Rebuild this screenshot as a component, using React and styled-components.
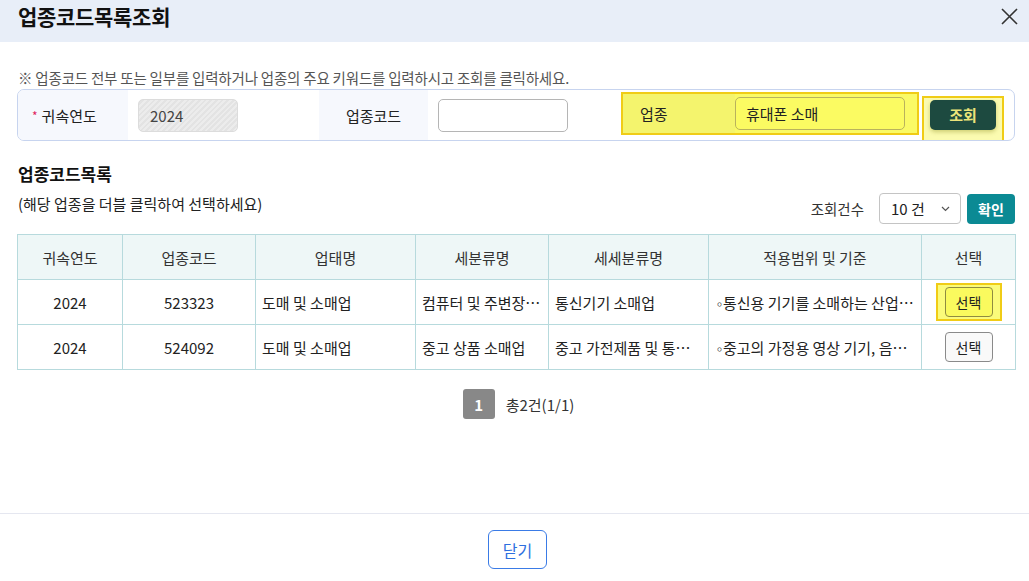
import styled, { createGlobalStyle } from 'styled-components';

const GlobalStyle = createGlobalStyle`
  * {
    box-sizing: border-box;
  }

  body {
    margin: 0;
    background: #ffffff;
    font-family: 'Noto Sans CJK KR', 'Noto Sans', sans-serif;
    color: #222;
  }
`;

const ROWS = [
  {
    year: '2024',
    code: '523323',
    biz: '도매 및 소매업',
    sub: '컴퓨터 및 주변장치 소매업',
    subSub: '통신기기 소매업',
    scope: '통신용 기기를 소매하는 산업활동을 말한다',
    guide: true,
  },
  {
    year: '2024',
    code: '524092',
    biz: '도매 및 소매업',
    sub: '중고 상품 소매업',
    subSub: '중고 가전제품 및 통신기기 소매업',
    scope: '중고의 가정용 영상 기기, 음향 기기를 소매',
    guide: false,
  },
];

const COLUMNS = [
  { title: '귀속연도', width: 105 },
  { title: '업종코드', width: 133 },
  { title: '업태명', width: 160 },
  { title: '세분류명', width: 133 },
  { title: '세세분류명', width: 160 },
  { title: '적용범위 및 기준', width: 213 },
  { title: '선택', width: 94 },
];

function CloseIcon() {
  return (
    <svg width="17" height="17" viewBox="0 0 17 17" fill="none">
      <path d="M1 1L16 16M16 1L1 16" stroke="#333" strokeWidth="1.6" />
    </svg>
  );
}

function ChevronIcon() {
  return (
    <svg width="9" height="6" viewBox="0 0 9 6" fill="none">
      <path d="M1 1L4.5 4.5L8 1" stroke="#555" strokeWidth="1.2" />
    </svg>
  );
}

function App() {
  return (
    <>
      <GlobalStyle />
      <Page>
        <Header>
          <Title>업종코드목록조회</Title>
          <CloseButton aria-label="닫기">
            <CloseIcon />
          </CloseButton>
        </Header>

        <Body>
          <Notice>※ 업종코드 전부 또는 일부를 입력하거나 업종의 주요 키워드를 입력하시고 조회를 클릭하세요.</Notice>

          <SearchBox>
            <LabelCell $width={110} $align="left">
              <Required>*</Required>귀속연도
            </LabelCell>
            <InputCell $width={191}>
              <ReadonlyInput>2024</ReadonlyInput>
            </InputCell>
            <LabelCell $width={109} $align="center">업종코드</LabelCell>
            <InputCell $width={190}>
              <TextInput $width={130} />
            </InputCell>
            <GuideGroup>
              <GuideLabel>업종</GuideLabel>
              <GuideInput>휴대폰 소매</GuideInput>
            </GuideGroup>
            <GuideButtonWrap>
              <SearchButton>조회</SearchButton>
            </GuideButtonWrap>
          </SearchBox>

          <SectionTitle>업종코드목록</SectionTitle>
          <ListToolbar>
            <Hint>(해당 업종을 더블 클릭하여 선택하세요)</Hint>
            <Controls>
              <ControlLabel>조회건수</ControlLabel>
              <Select>
                <span>10 건</span>
                <ChevronIcon />
              </Select>
              <ConfirmButton>확인</ConfirmButton>
            </Controls>
          </ListToolbar>

          <Table>
            <colgroup>
              {COLUMNS.map((c) => (
                <col key={c.title} style={{ width: c.width }} />
              ))}
            </colgroup>
            <thead>
              <tr>
                {COLUMNS.map((c) => (
                  <Th key={c.title}>{c.title}</Th>
                ))}
              </tr>
            </thead>
            <tbody>
              {ROWS.map((r) => (
                <tr key={r.code}>
                  <Td $align="center">{r.year}</Td>
                  <Td $align="center">{r.code}</Td>
                  <Td>{r.biz}</Td>
                  <Td>{r.sub}</Td>
                  <Td>{r.subSub}</Td>
                  <Td>
                    <Bullet>◦</Bullet>
                    {r.scope}
                  </Td>
                  <Td $align="center">
                    {r.guide ? (
                      <GuideSelectWrap>
                        <SelectButton $guide>선택</SelectButton>
                      </GuideSelectWrap>
                    ) : (
                      <SelectButton>선택</SelectButton>
                    )}
                  </Td>
                </tr>
              ))}
            </tbody>
          </Table>

          <Pagination>
            <PageNumber>1</PageNumber>
            <PageInfo>총2건(1/1)</PageInfo>
          </Pagination>
        </Body>

        <Footer>
          <FooterButton>닫기</FooterButton>
        </Footer>
      </Page>
    </>
  );
}

export default App;

const Page = styled.div`
  display: flex;
  flex-direction: column;
  width: 1029px;
  height: 581px;
  overflow: hidden;
`;

const Header = styled.div`
  display: flex;
  justify-content: space-between;
  align-items: center;
  height: 42px;
  padding: 0 11px 0 18px;

  background-color: #e8eef8;
`;

const Title = styled.h1`
  margin: 0;
  margin-top: -10px;

  color: #111;
  font-size: 21px;
  font-weight: 700;
  letter-spacing: -0.3px;
`;

const CloseButton = styled.button`
  display: flex;
  padding: 0;
  margin-top: -10px;

  border: none;
  background: none;
  cursor: pointer;
`;

const Body = styled.div`
  flex: 1;
  padding: 26px 14px 0 17px;
`;

const Notice = styled.p`
  margin: 0 0 0 1px;

  color: #555;
  font-size: 14.5px;
  line-height: 20px;
  letter-spacing: -0.2px;
`;

const SearchBox = styled.div`
  display: flex;
  align-items: stretch;
  height: 52px;
  margin-top: 1px;

  border: 1px solid #c7d4ef;
  border-radius: 7px;
  overflow: hidden;
`;

const LabelCell = styled.div`
  display: flex;
  align-items: center;
  justify-content: ${(p) => (p.$align === 'center' ? 'center' : 'flex-start')};
  width: ${(p) => p.$width}px;
  padding-left: ${(p) => (p.$align === 'center' ? 0 : 14)}px;

  background-color: #f6f8fd;
  color: #222;
  font-size: 15px;
`;

const Required = styled.span`
  margin-right: 4px;

  color: #e0245e;
  font-size: 12px;
`;

const InputCell = styled.div`
  display: flex;
  align-items: center;
  width: ${(p) => p.$width}px;
  padding-left: 10px;
`;

const ReadonlyInput = styled.div`
  display: flex;
  align-items: center;
  width: 100px;
  height: 33px;
  padding-left: 11px;

  border: 1px solid #dcdcdc;
  border-radius: 5px;
  background: repeating-linear-gradient(135deg, #ececec 0 2px, #e3e3e3 2px 4px);
  color: #444;
  font-size: 15px;
`;

const TextInput = styled.input`
  width: ${(p) => p.$width}px;
  height: 33px;

  border: 1px solid #b5b5b5;
  border-radius: 5px;
  background: #fff;
`;

const GuideGroup = styled.div`
  display: flex;
  align-items: center;
  width: 298px;
  margin: 2px 0 5px 3px;

  border: 2px solid #f0cc16;
  background-color: #fafa66;
`;

const GuideLabel = styled.div`
  display: flex;
  align-items: center;
  align-self: stretch;
  width: 112px;
  padding-left: 17px;

  background-color: #f4f46d;
  color: #222;
  font-size: 15px;
`;

const GuideInput = styled.div`
  display: flex;
  align-items: center;
  width: 170px;
  height: 33px;
  padding-left: 10px;

  border: 1px solid #b9b25c;
  border-radius: 5px;
  background-color: #fbfb62;
  color: #222;
  font-size: 15px;
`;

const GuideButtonWrap = styled.div`
  display: flex;
  align-items: center;
  justify-content: center;
  width: 82px;
  margin: 6px 0 -2px 3px;

  border: 2px solid #f0cc16;
  background-color: #fbfbb0;
`;

const SearchButton = styled.button`
  width: 66px;
  height: 30px;
  margin-top: -9px;

  border: none;
  border-radius: 5px;
  background-color: #1d4a40;
  box-shadow: 0 2px 4px rgba(120, 120, 0, 0.35);
  color: #ece47a;
  font-family: inherit;
  font-size: 15px;
  font-weight: 700;
`;

const SectionTitle = styled.h2`
  margin: 21px 0 0 1px;

  color: #111;
  font-size: 17px;
  font-weight: 700;
  line-height: 24px;
`;

const ListToolbar = styled.div`
  display: flex;
  justify-content: space-between;
  align-items: flex-end;
  margin-top: 7px;
`;

const Hint = styled.p`
  margin: 0 0 20px 1px;

  color: #222;
  font-size: 15px;
  line-height: 20px;
`;

const Controls = styled.div`
  display: flex;
  align-items: center;
  gap: 6px;
  margin-bottom: 10px;
`;

const ControlLabel = styled.span`
  margin-right: 9px;

  color: #333;
  font-size: 14.5px;
`;

const Select = styled.div`
  display: flex;
  justify-content: space-between;
  align-items: center;
  width: 82px;
  height: 31px;
  padding: 0 10px 0 11px;

  border: 1px solid #c4c4c4;
  border-radius: 4px;
  color: #222;
  font-size: 15px;
`;

const ConfirmButton = styled.button`
  width: 48px;
  height: 30px;

  border: none;
  border-radius: 4px;
  background-color: #0b8a94;
  color: #fff;
  font-family: inherit;
  font-size: 14px;
  font-weight: 700;
`;

const Table = styled.table`
  width: 998px;
  table-layout: fixed;
  border-collapse: collapse;

  border: 1px solid #b7dadd;
  font-size: 15px;
`;

const Th = styled.th`
  height: 45px;

  border: 1px solid #b7dadd;
  background-color: #eef7f7;
  color: #333;
  font-weight: 400;
`;

const Td = styled.td`
  height: 45px;
  padding: 0 6px;

  border: 1px solid #b7dadd;
  color: #222;
  text-align: ${(p) => p.$align || 'left'};
  white-space: nowrap;
  overflow: hidden;
  text-overflow: ellipsis;
`;

const Bullet = styled.span`
  margin: 0 -3px 0 -2px;

  font-size: 13px;
`;

const GuideSelectWrap = styled.div`
  display: inline-flex;
  align-items: center;
  justify-content: center;
  vertical-align: middle;
  width: 66px;
  height: 38px;

  border: 2px solid #f0cc16;
  background-color: #fbfb7a;
`;

const SelectButton = styled.button`
  width: 48px;
  height: 30px;
  padding: 0;
  vertical-align: middle;

  border: 1px solid ${(p) => (p.$guide ? '#8f8c40' : '#8a8a8a')};
  border-radius: 4px;
  background-color: ${(p) => (p.$guide ? '#fafa5e' : '#f9f9f9')};
  color: #222;
  font-family: inherit;
  font-size: 14px;
`;

const Pagination = styled.div`
  display: flex;
  justify-content: center;
  align-items: center;
  gap: 11px;
  margin-top: 19px;
  padding-left: 5px;
`;

const PageNumber = styled.span`
  display: flex;
  justify-content: center;
  align-items: center;
  width: 32px;
  height: 30px;

  border-radius: 3px;
  background-color: #888;
  color: #fff;
  font-size: 15px;
  font-weight: 700;
`;

const PageInfo = styled.span`
  color: #333;
  font-size: 15px;
`;

const Footer = styled.div`
  display: flex;
  justify-content: center;
  height: 68px;
  padding-top: 16px;
  padding-left: 6px;

  border-top: 1px solid #e5e7f0;
`;

const FooterButton = styled.button`
  width: 59px;
  height: 39px;

  border: 1px solid #3a7be6;
  border-radius: 6px;
  background: #fff;
  color: #2d6fe0;
  font-family: inherit;
  font-size: 16px;
`;
